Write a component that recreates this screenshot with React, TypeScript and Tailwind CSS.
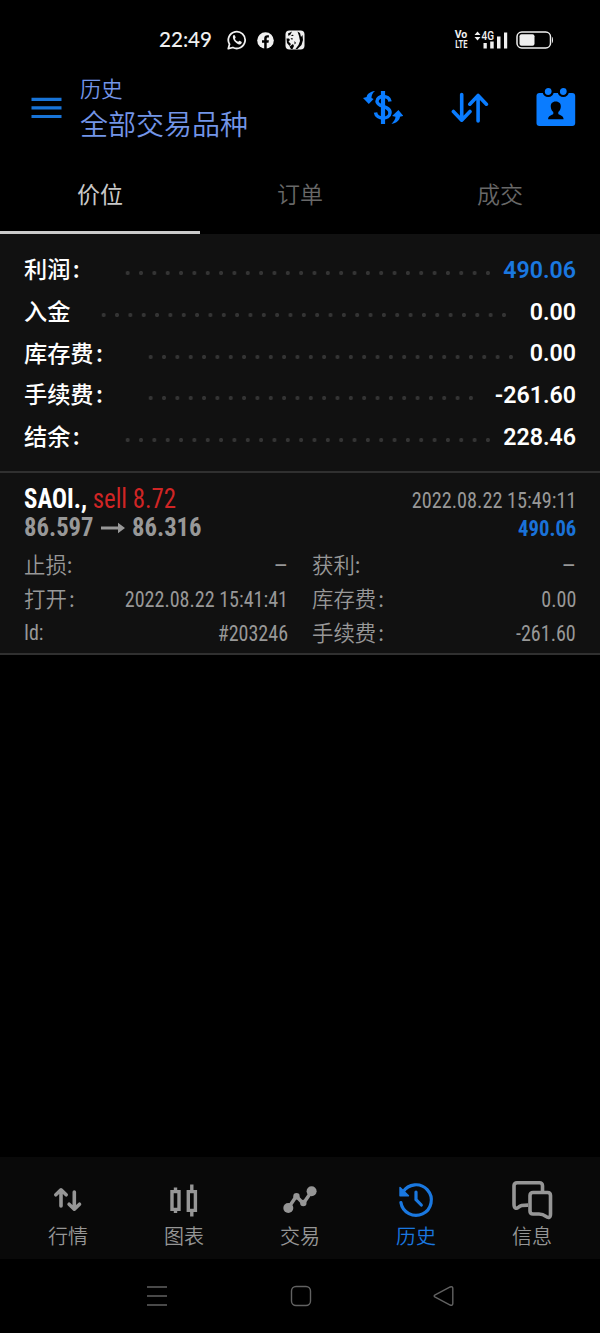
import type { ReactNode } from "react";

type Row = { label: string; value: string; dots: string; color?: string };

const summary: Row[] = [
  { label: "利润：", value: "490.06", dots: "w-[374px]", color: "text-[#1a78e0]" },
  { label: "入金", value: "0.00", dots: "w-[414px]" },
  { label: "库存费：", value: "0.00", dots: "w-[374px]" },
  { label: "手续费：", value: "-261.60", dots: "w-[334px]" },
  { label: "结余：", value: "228.46", dots: "w-[374px]" },
];

function Condensed({ children, className = "" }: { children: ReactNode; className?: string }) {
  return (
    <span className={`inline-block whitespace-pre font-['Roboto_Condensed','Roboto','Noto_Sans_CJK_SC',sans-serif] ${className}`}>
      {children}
    </span>
  );
}

function WideColonLabel({ text }: { text: string }) {
  if (!text.endsWith("：")) return <>{text}</>;
  return (
    <>
      {text.slice(0, -1)}
      <span className="inline-block w-[1em] pl-[.1em]">:</span>
    </>
  );
}

function StatusBar() {
  return (
    <div className="flex h-[76px] items-start pt-[28px] text-[#f0f0f0]">
      <span className="-mt-px ml-[159px] w-[68px] font-['Lato',sans-serif] text-[20.6px] leading-[25px] font-medium">22:49</span>
      <svg className="mt-[2px]" width="20" height="20" viewBox="0 0 20 20" fill="none">
        <path d="M1.3 18.7 2.5 14.3A8.4 8.4 0 1 1 5.9 17.5Z" stroke="currentColor" strokeWidth="1.8" strokeLinejoin="round" />
        <path d="M6 5.8c.7-1 1.7-.9 2 0l.6 1.5c.2.5-.8 1.3-.6 1.6.7 1.3 1.7 2.2 3.1 2.9.5.1 1.1-1.2 1.6-1l1.7.9c.9.5.1 1.9-.9 2.5-3 1.3-8.6-4.2-7.5-8.4Z" fill="currentColor" />
      </svg>
      <svg className="mt-[4px] ml-[10px]" width="17" height="17" viewBox="0 0 17 17">
        <circle cx="8.5" cy="8.5" r="8.3" fill="currentColor" />
        <path d="M7.2 17v-6.3H5V8.2h2.2V6.4c0-2.2 1.2-3.2 3.1-3.2l1.6.1v2.1h-1.1c-.9 0-1.1.5-1.1 1.2v1.6h2.2l-.4 2.5H9.7V17Z" fill="#000" />
      </svg>
      <svg className="mt-[2px] ml-[11px]" width="20" height="20" viewBox="0 0 20 20">
        <rect x=".5" y=".5" width="19" height="19" rx="4" fill="currentColor" />
        <path d="M3 3.500 7 1.500 5.500 4.500 3.500 6ZM5.500 6 8 4.500 8.500 6ZM1.500 8.500H4l1 1.500-1.500 1.500L6 14l-1.500 2L2 13ZM5.500 8 8 8.500 7 10ZM4.500 16.500 8 14l1 2-1.500 3H6ZM12.500 1.500 15 3l1 4 1.500-2 .5 5-1.500 5-4 4h-2l3-4 1.500-4-1-5ZM9.500 11l1.500 2-1.500 1.500Z" fill="#000" />
      </svg>
      <div className="mt-[2px] ml-[149px] flex w-[14px] flex-col items-center font-['Roboto',sans-serif] text-[10.5px] leading-[10px] font-bold">
        <span className="h-[10px]">Vo</span>
        <span className="h-[10px] scale-x-[.72] text-[10.5px] leading-[10px]">LTE</span>
      </div>
      <svg className="mt-[1px] ml-[6px]" width="35" height="20" viewBox="0 0 35 20" fill="currentColor">
        <path d="M.5 6 3.5 2.500 6.500 6ZM.5 8 3.500 11.500 6.500 8Z" />
        <path d="M9.500 14h3.300v5.500H9.500ZM16.200 12.500h3.500v7h-3.500ZM23 7.500h3.500v12H23ZM30 3.500h3.200v16H30Z" />
        <text x="7.500" y="11" fontFamily="Roboto" fontSize="12.500" fontWeight="500" textLength="12.500" lengthAdjust="spacingAndGlyphs">4G</text>
      </svg>
      <svg className="mt-[3px] ml-[7px]" width="38" height="18" viewBox="0 0 38 18">
        <rect x="1" y="1" width="33.5" height="16" rx="4.8" fill="none" stroke="currentColor" strokeWidth="1.5" />
        <rect x="3.5" y="3.3" width="15" height="11.4" rx="2" fill="currentColor" />
        <path d="M36 6c1.3.4 1.3 5.6 0 6Z" fill="currentColor" />
      </svg>
    </div>
  );
}

function Header() {
  return (
    <header className="flex h-[80px] text-[#0a7cff]">
      <svg className="mt-[21px] ml-[31px]" width="31" height="22" viewBox="0 0 31 22">
        <path d="M.5 2.3h30M.5 10.9h30M.5 19.5h30" stroke="#1874d8" strokeWidth="3.2" />
      </svg>
      <div className="ml-[18px] w-[281px] font-['Noto_Sans_CJK_SC',sans-serif] font-[350] text-[#7395e8]">
        <div className="-mt-[2px] h-[28px] text-[21.3px] leading-[28px]">历史</div>
        <div className="mt-[2px] h-[38px] text-[28px] leading-[38px]">全部交易品种</div>
      </div>
      <svg className="mt-[14px] ml-[2px]" width="40" height="36" viewBox="0 0 40 36" fill="none">
        <path d="M27 11.500C26.500 5 14 4.900 14 11.200 14 17.500 27.500 15.500 27 23 26.500 30 13.400 29.600 12.500 22.500" stroke="currentColor" strokeWidth="3.5" />
        <path d="M20 1v33" stroke="currentColor" strokeWidth="4.2" />
        <path d="M12 1C7 1.800 3.800 4 3.700 7.100L0 8 5.800 14l4.800-5L8.500 8C8.500 5 9.500 3.200 12 1Z" fill="currentColor" />
        <path d="M28.5 34c5.200-1 8.200-3.600 8.500-7.200l3.300-1L35.400 20l-6.300 6 3.400.700c0 2.600-1.600 4.500-4 7.300Z" fill="currentColor" />
      </svg>
      <svg className="mt-[16px] ml-[48px]" width="38" height="32" viewBox="0 0 38 32" fill="none">
        <path d="M10.7 2.5v25M2.4 19.5l8.3 8.7 8.3-8.7M27.1 29V4M18.8 12.2l8.3-8.7 8.3 8.7" stroke="currentColor" strokeWidth="3.6" strokeLinecap="round" strokeLinejoin="round" />
      </svg>
      <svg className="mt-[11px] ml-[47px]" width="40" height="40" viewBox="0 0 40 40">
        <rect x=".5" y="6" width="38.700" height="33" rx="3" fill="currentColor" />
        <circle cx="12.2" cy="4.500" r="4.500" fill="currentColor" stroke="#000" strokeWidth="2.200" />
        <circle cx="27.3" cy="4.500" r="4.500" fill="currentColor" stroke="#000" strokeWidth="2.200" />
        <path fill="#000" d="M19.700 14.500c3.600 0 5.400 2.300 5.100 5.400-.2 2.700-1.500 4-2.500 5v2c1.500 1.300 5.200 1.400 5.300 5.300H12.100c0-3.900 3.800-4 5.200-5.300v-2c-1-1-2.300-2.300-2.500-5-.3-3.100 1.400-5.400 4.900-5.400Z" />
      </svg>
    </header>
  );
}

function Tabs() {
  return (
    <div className="grid h-[78px] grid-cols-3 text-center font-['Noto_Sans_CJK_SC',sans-serif] text-[23px] leading-[75px]">
      <div className="border-b-[3px] border-[#cbcbcb] text-[#c8c8c8]">价位</div>
      <div className="font-[350] text-[#686868]">订单</div>
      <div className="font-[350] text-[#686868]">成交</div>
    </div>
  );
}

function Summary() {
  return (
    <section className="h-[237px] bg-[#111111] px-6 pt-[15px]">
      {summary.map((r) => (
        <div key={r.label} className="flex h-[41.7px] items-center text-white">
          <span className="-mt-[3px] font-['Noto_Sans_CJK_SC',sans-serif] text-[23.2px] leading-[34px] font-medium">
            <WideColonLabel text={r.label} />
          </span>
          <span className={`mt-[7px] ml-[27px] h-[6px] shrink-0 bg-[radial-gradient(circle,#343434_1.7px,transparent_2.4px)] bg-[length:13.35px_6px] ${r.dots}`} />
          <span className={`ml-auto font-['Roboto',sans-serif] text-[23.2px] leading-[34px] font-semibold ${r.color ?? ""}`}>{r.value}</span>
        </div>
      ))}
    </section>
  );
}

function Detail({ label, value }: { label: string; value: string }) {
  return (
    <div className="flex h-[34px] items-center justify-between">
      {label === "Id:" ? (
        <Condensed className="mt-[3px] origin-left scale-x-[.93] text-[21.4px]">{label}</Condensed>
      ) : (
        <span className="font-['Noto_Sans_CJK_SC',sans-serif] text-[21.4px] font-[350]">
          <WideColonLabel text={label} />
        </span>
      )}
      {value === "–" ? (
        <Condensed className="mt-[4px] origin-right scale-x-[1.2] text-[21.4px]">{value}</Condensed>
      ) : (
        <Condensed className="mt-[4px] origin-right scale-x-[.938] text-[21.4px]">{value}</Condensed>
      )}
    </div>
  );
}

function Position() {
  return (
    <section className="h-[184px] border-y-2 border-[#303030] bg-[#111111] px-6 pt-[11px] text-[#989898]">
      <div className="flex h-[29px] items-center justify-between">
        <Condensed className="mt-px origin-left scale-x-[.92] text-[27px] leading-[29px] text-[#d02525]">
          <span className="font-bold text-white">SAOI.,</span> sell 8.72
        </Condensed>
        <Condensed className="mt-[5px] origin-right scale-x-[.933] text-[21.7px]">2022.08.22 15:49:11</Condensed>
      </div>
      <div className="flex h-[29px] items-center">
        <Condensed className="w-[77px] origin-left scale-x-[.95] text-[26px] leading-[29px] font-bold">86.597</Condensed>
        <svg width="24" height="12" viewBox="0 0 24 12" fill="currentColor">
          <path d="M0 4.500h17V.8L24 6l-7 5.200V7.500H0Z" />
        </svg>
        <Condensed className="ml-[7px] origin-left scale-x-[.95] text-[26px] leading-[29px] font-bold">86.316</Condensed>
        <Condensed className="mt-[3px] ml-auto origin-right scale-x-[.965] text-[21.4px] font-bold text-[#1a72d8]">490.06</Condensed>
      </div>
      <div className="mt-[5px] grid grid-cols-2 gap-x-6">
        <Detail label="止损:" value="–" />
        <Detail label="获利:" value="–" />
        <Detail label="打开：" value="2022.08.22 15:41:41" />
        <Detail label="库存费：" value="0.00" />
        <Detail label="Id:" value="#203246" />
        <Detail label="手续费：" value="-261.60" />
      </div>
    </section>
  );
}

const navItems: { label: string; icon: ReactNode; active?: boolean }[] = [
  {
    label: "行情",
    icon: <path d="M13 31V15M7.8 19.800l5.200-5 5.200 5M26.300 17v17M21.100 29.200l5.200 5 5.200-5" stroke="currentColor" strokeWidth="3.6" strokeLinecap="round" strokeLinejoin="round" />,
  },
  {
    label: "图表",
    icon: <path d="M8 16.600h7v17.800H8ZM24.300 16.600h7.100v18.800h-7.100ZM11.500 12.500v4M11.500 34v4M27.800 9.500v7M27.800 35v6.500" stroke="currentColor" strokeWidth="3.4" />,
  },
  {
    label: "交易",
    icon: (
      <>
        <path d="M8.300 33 16.300 21.300 23.300 28.500 31.600 16.500" stroke="currentColor" strokeWidth="3.5" strokeLinejoin="round" />
        <circle cx="8.3" cy="33" r="5" fill="currentColor" />
        <circle cx="31.6" cy="16.300" r="5" fill="currentColor" />
        <circle cx="16.5" cy="21.300" r="3.200" fill="currentColor" />
        <circle cx="23.3" cy="28" r="3.200" fill="currentColor" />
      </>
    ),
  },
  {
    label: "历史",
    active: true,
    icon: (
      <>
        <path d="M4.900 27.500A15.300 15.300 0 1 0 7 17M20 17v7.500l5.300 5.500" stroke="currentColor" strokeWidth="3.2" strokeLinecap="round" />
        <path d="M4 12.500v8.300h8.500Z" fill="currentColor" stroke="currentColor" strokeWidth="1.400" strokeLinejoin="round" />
      </>
    ),
  },
  {
    label: "信息",
    icon: (
      <path d="M30.5 16V10.800c0-1.800-1.200-3-3-3H5c-1.800 0-3 1.200-3 3V29c0 5 2.500 4.800 4.600 3.100 2-1.800 3-2 9.400-2M21 17.500h14.500c1.800 0 3 1.200 3 3v18.500c0 3.800-2.100 4.300-4.600 2.400-2.500-2-3.500-2.400-6.900-2.400h-6c-1.800 0-3-1.200-3-3V20.500c0-1.800 1.200-3 3-3Z" stroke="currentColor" strokeWidth="3.6" strokeLinejoin="round" />
    ),
  },
];

function BottomNav() {
  return (
    <nav className="grid h-[102px] grid-cols-5 bg-[#090909] px-[10px] pt-[18px]">
      {navItems.map((n) => (
        <div key={n.label} className={`flex flex-col items-center ${n.active ? "text-[#1a78e0]" : "text-[#969696]"}`}>
          <svg width="40" height="46" viewBox="0 0 40 46" fill="none" className="overflow-visible">{n.icon}</svg>
          <span className="font-['Noto_Sans_CJK_SC',sans-serif] text-[20px] leading-[30px] font-[350]">{n.label}</span>
        </div>
      ))}
    </nav>
  );
}

function SystemNav() {
  return (
    <div className="flex h-[74px] items-center justify-between pr-[145px] pl-[146px] text-[#626262]">
      <svg width="22" height="22" viewBox="0 0 22 22" fill="none" stroke="currentColor" strokeWidth="1.4">
        <path d="M1 2h20M1 11h20M1 20h20" />
      </svg>
      <svg width="22" height="22" viewBox="0 0 22 22" fill="none" stroke="currentColor" strokeWidth="1.4">
        <rect x="1.5" y="1.5" width="19" height="19" rx="4.5" />
      </svg>
      <svg width="22" height="22" viewBox="0 0 22 22" fill="none" stroke="currentColor" strokeWidth="1.4">
        <path d="M2.2 9.8 17.2 2c1.5-.7 2.6 0 2.6 1.5v15c0 1.6-1.1 2.2-2.6 1.5l-15-7.8c-1.4-.8-1.4-1.6 0-2.4Z" />
      </svg>
    </div>
  );
}

export default function App() {
  return (
    <div className="flex h-[1333px] w-[600px] flex-col overflow-hidden bg-black">
      <StatusBar />
      <Header />
      <Tabs />
      <Summary />
      <Position />
      <div className="flex-1" />
      <BottomNav />
      <SystemNav />
    </div>
  );
}
